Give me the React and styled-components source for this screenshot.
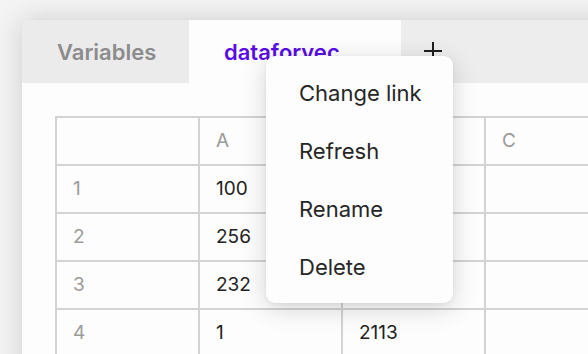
import React from "react"
import styled, { createGlobalStyle } from "styled-components"

const GlobalStyle = createGlobalStyle`
  html, body {
    margin: 0;
    padding: 0;
    background: #f4f4f4;
    font-family: Inter, "Noto Sans", sans-serif;
    overflow: hidden;
  }
`

const Page = styled.div`
  width: 588px;
  height: 354px;
  padding: 20px 0 0 22px;
  box-sizing: border-box;
  overflow: hidden;
`

const Window = styled.div`
  position: relative;
  width: 640px;
  height: 400px;
  background: #fdfdfd;
  box-shadow: 0 0 28px rgba(0, 0, 0, 0.16);
`

const TabBar = styled.div`
  display: flex;
  align-items: stretch;
  height: 63px;
  background: #ededed;
`

const Tab = styled.div`
  display: flex;
  align-items: center;
  box-sizing: border-box;
  width: ${p => p.$w}px;
  padding-left: ${p => p.$pad}px;
  font-size: 22px;
  font-weight: 600;
  color: ${p => (p.$active ? "#5a0ce6" : "#8c8c8c")};
  background: ${p => (p.$active ? "#fdfdfd" : "#ebebeb")};
`

const AddButton = styled.div`
  display: flex;
  align-items: center;
  padding-left: 22px;
  padding-bottom: 2px;
`

const Content = styled.div`
  padding: 33px 0 0 33px;
`

const Grid = styled.table`
  border-collapse: collapse;
  font-size: 19px;
`

const Cell = styled.td`
  width: 143px;
  min-width: 143px;
  max-width: 143px;
  height: 48px;
  padding: 0 0 2px 16px;
  box-sizing: border-box;
  border: 2px solid #d3d3d3;
  color: ${p => (p.$muted ? "#9a9a9a" : "#222")};
  vertical-align: middle;
`

const Menu = styled.div`
  position: absolute;
  left: 244px;
  top: 36px;
  width: 187px;
  padding: 8px 0 7px;
  background: #fdfdfd;
  border-radius: 9px;
  box-shadow: 0 6px 26px rgba(0, 0, 0, 0.16), 0 1px 4px rgba(0, 0, 0, 0.06);
`

const MenuItem = styled.div`
  display: flex;
  align-items: center;
  height: 58px;
  padding-left: 33px;
  font-size: 22px;
  color: #262626;
`

const rows = [
  ["1", "100", ""],
  ["2", "256", ""],
  ["3", "232", ""],
  ["4", "1", "2113"],
]

export default function App() {
  return (
    <Page>
      <GlobalStyle />
      <Window>
        <TabBar>
          <Tab $w={167} $pad={35}>Variables</Tab>
          <Tab $w={212} $pad={35} $active>dataforvec</Tab>
          <AddButton>
            <svg width="20" height="20" viewBox="0 0 20 20">
              <path d="M10 1v18M1 10h18" stroke="#1e1e1e" strokeWidth="2" />
            </svg>
          </AddButton>
        </TabBar>
        <Content>
          <Grid>
            <tbody>
              <tr>
                <Cell />
                <Cell $muted>A</Cell>
                <Cell />
                <Cell $muted>C</Cell>
              </tr>
              {rows.map(r => (
                <tr key={r[0]}>
                  <Cell $muted>{r[0]}</Cell>
                  <Cell>{r[1]}</Cell>
                  <Cell>{r[2]}</Cell>
                  <Cell />
                </tr>
              ))}
            </tbody>
          </Grid>
        </Content>
        <Menu>
          <MenuItem>Change link</MenuItem>
          <MenuItem>Refresh</MenuItem>
          <MenuItem>Rename</MenuItem>
          <MenuItem>Delete</MenuItem>
        </Menu>
      </Window>
    </Page>
  )
}
